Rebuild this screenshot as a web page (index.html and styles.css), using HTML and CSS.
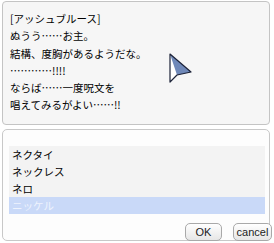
FILE: index.html
```html
<!DOCTYPE html>
<html>
<head lang="ja">
    <meta charset="UTF-8">
    <title></title>
    <link rel="stylesheet" href="styles.css">
</head>
<body>
    <div class="talk">
        <p>[アッシュブルース]</p>
        <p>ぬうう……お主。</p>
        <p>結構、度胸があるようだな。</p>
        <p>…………!!!!</p>
        <p>ならば……一度呪文を</p>
        <p>唱えてみるがよい……!!</p>
        <svg class="cursor" width="26" height="32" viewBox="0 0 26 32">
            <polygon points="2,1 23,19 9,22 2,29" fill="#ffffff"/>
            <polygon points="2,1 23,19 9,22" fill="#6f88b8"/>
            <polygon points="2,1 23,19 9,22 2,29" fill="none" stroke="#1c2238" stroke-width="1.2" stroke-linejoin="round"/>
        </svg>
    </div>
    <div class="menu">
        <ul class="list">
            <li>ネクタイ</li>
            <li>ネックレス</li>
            <li>ネロ</li>
            <li class="current">ニッケル</li>
        </ul>
        <div class="btns">
            <span class="btn ok">OK</span>
            <span class="btn cancel">cancel</span>
        </div>
    </div>
</body>
</html>
```

FILE: styles.css
```css
*{
    margin:0px;
    padding:0px;
}
body{
    background:#ffffff;
    width:274px;
    height:243px;
    font-family:"Noto Sans CJK JP","Liberation Sans",sans-serif;
    font-size:10.5px;
    color:#000;
}
.talk{
    position:relative;
    margin:1px 0 0 2px;
    width:268px;
    height:124px;
    box-sizing:border-box;
    border:1px solid #c4c4c4;
    border-radius:4px;
    background:#f6f6f6;
    padding:8px 0 0 7px;
}
.talk p{
    line-height:17.3px;
    height:17.3px;
}
.cursor{
    position:absolute;
    left:165px;
    top:51px;
}
.menu{
    position:relative;
    margin:4px 0 0 2px;
    width:268px;
    height:112px;
    box-sizing:border-box;
    border:1px solid #c8c8c8;
    border-radius:5px;
    background:#fdfdfd;
    padding:16px 4px 0 6px;
}
.list{
    list-style:none;
    background:#f3f3f3;
}
.list li{
    height:17px;
    line-height:17px;
    padding-left:3px;
}
.list .current{
    background:#c9d9f8;
    color:#eef3fd;
}
.btns{
    position:absolute;
    right:-3px;
    bottom:-1px;
    display:flex;
    gap:11px;
}
.btn{
    display:inline-block;
    height:18px;
    box-sizing:border-box;
    border:1px solid #a9a9a9;
    border-radius:5px;
    background:linear-gradient(#ffffff,#e6e6e6);
    font-family:"Liberation Sans",sans-serif;
    font-size:11px;
    line-height:16px;
    color:#222;
    text-align:center;
    white-space:nowrap;
}
.ok{
    width:37px;
}
.cancel{
    width:39px;
}
```
